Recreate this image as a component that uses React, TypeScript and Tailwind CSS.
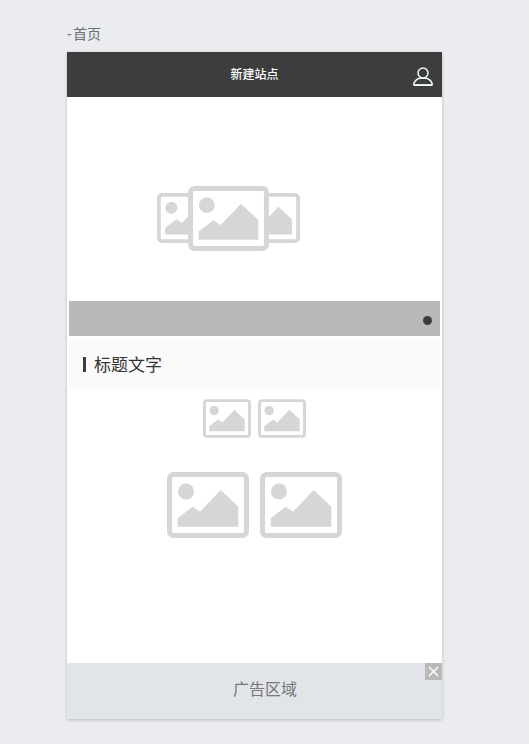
import { X } from 'lucide-react'

function PlaceholderIcon({ className }: { className: string }) {
  return (
    <svg viewBox="0 0 82 66" className={className}>
      <rect x="2.5" y="2.5" width="77" height="61" rx="4" fill="#fff" stroke="#d6d6d6" strokeWidth="5" />
      <circle cx="19" cy="19.5" r="8" fill="#d6d6d6" />
      <path d="M10.7 54.7V46.3L25.7 34.7L33 39.7L53.7 18L71.3 34.7V54.7Z" fill="#d6d6d6" />
    </svg>
  )
}

export default function App() {
  return (
    <div className="min-h-screen bg-[#eaecf0] pl-[67px] pt-[24px] font-['Liberation_Sans','Noto_Sans_CJK_SC',sans-serif]">
      <div className="h-[28px] text-sm leading-[21px] text-[#6b6e75] [word-spacing:-2.5px]">- 首页</div>

      <div className="flex h-[667px] w-[375px] flex-col bg-white shadow-[0_1px_3px_rgba(0,0,0,0.22)]">
        <header className="relative flex h-[45px] shrink-0 items-center justify-center bg-[#3d3d3d]">
          <span className="text-xs font-medium text-white">新建站点</span>
          <svg viewBox="0 0 20 20" className="absolute right-[9px] top-[14px] h-5 w-5" fill="none" stroke="#eef6fa" strokeWidth="1.5">
            <circle cx="10" cy="7" r="5" />
            <path d="M0.8 19C0.8 15.5 3.5 13.3 6.5 12.2H13.5C16.5 13.3 19.2 15.5 19.2 19Z" strokeLinejoin="round" />
            <path d="M1 19.2H19" strokeWidth="1.8" />
          </svg>
        </header>

        <div className="flex h-[204px] shrink-0 items-start justify-center pr-[52px] pt-[89px]">
          <PlaceholderIcon className="mt-[7px] h-[50px] w-[62px]" />
          <PlaceholderIcon className="relative z-10 -mx-[31px] h-[65px] w-[81px]" />
          <PlaceholderIcon className="mt-[7px] h-[50px] w-[62px]" />
        </div>

        <div className="mx-[2px] flex h-[35px] shrink-0 justify-end bg-[#b9b9b9] pr-2 pt-[15px]">
          <span className="h-[9px] w-[9px] rounded-full bg-[#3d3d3d]" />
        </div>

        <div className="mx-[2px] mt-[4px] flex h-[48px] shrink-0 items-center gap-2 bg-[#fafafa] pl-[14px]">
          <span className="h-[15px] w-[3px] bg-[#3d3d3d]" />
          <span className="pt-[4px] text-[17px] text-[#333]">标题文字</span>
        </div>

        <div className="mt-[11px] flex justify-center gap-[7px]">
          <PlaceholderIcon className="h-[39px] w-[48px]" />
          <PlaceholderIcon className="h-[39px] w-[48px]" />
        </div>

        <div className="mt-[34px] flex justify-center gap-[11px]">
          <PlaceholderIcon className="h-[66px] w-[82px]" />
          <PlaceholderIcon className="h-[66px] w-[82px]" />
        </div>

        <div className="relative mt-auto flex h-[56px] shrink-0 items-center bg-[#e1e4e8] pb-[2px] pl-[166px]">
          <span className="text-base text-[#777]">广告区域</span>
          <div className="absolute right-0 top-0 flex h-[17px] w-[17px] items-center justify-center bg-[#b9b9b9]">
            <X size={17} color="#fff" strokeWidth={2} />
          </div>
        </div>
      </div>
    </div>
  )
}
